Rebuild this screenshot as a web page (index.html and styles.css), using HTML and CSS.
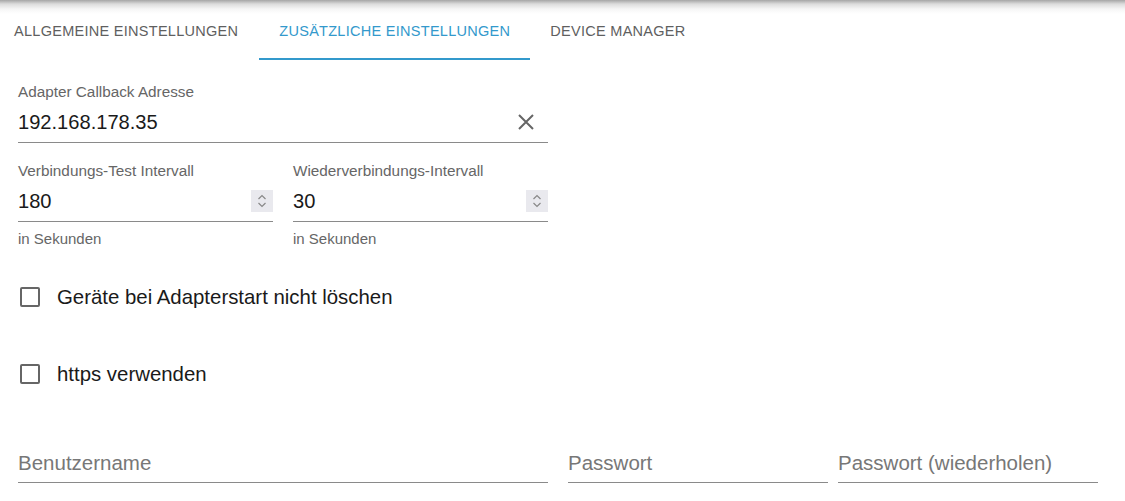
FILE: index.html
```html
<!DOCTYPE html>
<html lang="de">
<head>
<meta charset="utf-8">
<link rel="stylesheet" href="styles.css">
</head>
<body>
<div class="tabs">
  <div class="tab first">Allgemeine Einstellungen</div>
  <div class="tab active">Zusätzliche Einstellungen</div>
  <div class="tab">Device Manager</div>
</div>
<div class="content">
  <div class="field wide">
    <div class="label">Adapter Callback Adresse</div>
    <div class="value-row">
      <span class="value">192.168.178.35</span>
      <svg class="clear" width="20" height="20" viewBox="0 0 20 20"><path d="M3 3 L17 17 M17 3 L3 17" stroke="#666" stroke-width="2" fill="none"/></svg>
    </div>
  </div>
  <div class="row2">
    <div class="col">
      <div class="field">
        <div class="label">Verbindungs-Test Intervall</div>
        <div class="value-row">
          <span class="value">180</span>
          <span class="spin"><svg width="22" height="22" viewBox="0 0 22 22"><path d="M7.5 9 L11 5.5 L14.5 9 M7.5 13 L11 16.5 L14.5 13" stroke="#888" stroke-width="1.2" fill="none"/></svg></span>
        </div>
      </div>
      <div class="helper">in Sekunden</div>
    </div>
    <div class="col">
      <div class="field">
        <div class="label">Wiederverbindungs-Intervall</div>
        <div class="value-row">
          <span class="value">30</span>
          <span class="spin"><svg width="22" height="22" viewBox="0 0 22 22"><path d="M7.5 9 L11 5.5 L14.5 9 M7.5 13 L11 16.5 L14.5 13" stroke="#888" stroke-width="1.2" fill="none"/></svg></span>
        </div>
      </div>
      <div class="helper">in Sekunden</div>
    </div>
  </div>
  <label class="check first-check"><span class="box"></span><span class="check-label">Geräte bei Adapterstart nicht löschen</span></label>
  <label class="check second-check"><span class="box"></span><span class="check-label">https verwenden</span></label>
  <div class="row3">
    <div class="field plain"><div class="placeholder">Benutzername</div></div>
    <div class="field plain"><div class="placeholder">Passwort</div></div>
    <div class="field plain"><div class="placeholder">Passwort (wiederholen)</div></div>
  </div>
</div>
</body>
</html>
```
FILE: styles.css
```css
* { box-sizing: border-box; }
html, body { margin: 0; padding: 0; background: #fff; }
body { font-family: "Liberation Sans", Arial, sans-serif; color: #222; width: 1125px; height: 501px; overflow: hidden; }

.tabs {
  display: flex;
  height: 60px;
  background: linear-gradient(to bottom, #a6a6a6 0px, #dcdcdc 4px, #f6f6f6 9px, #fff 14px);
}
.tab {
  display: flex;
  align-items: center;
  padding: 3px 20px 0;
  font-size: 14.5px;
  letter-spacing: 0.28px;
  text-transform: uppercase;
  color: #5f5f5f;
  border-bottom: 2px solid transparent;
}
.tab.first { padding-left: 14px; padding-right: 21px; }
.tab.active { color: #3399cc; border-bottom-color: #3399cc; }

.content { padding: 0 18px; }

.field { border-bottom: 1px solid #8a8a8a; }
.wide { width: 530px; margin-top: 24px; }
.label { font-size: 15.3px; line-height: 16px; color: #666; }
.value-row {
  display: flex;
  align-items: center;
  justify-content: space-between;
  height: 42px;
  padding: 11px 0 9px;
}
.value { font-size: 20.1px; line-height: 22px; color: #1a1a1a; }
.clear { margin-right: 12px; }

.row2 { display: grid; grid-template-columns: 255px 255px; column-gap: 20px; margin-top: 20px; }
.spin { width: 22px; height: 22px; background: #e9e9ee; display: block; }
.spin svg { display: block; }
.helper { font-size: 15px; line-height: 16px; color: #666; margin-top: 9px; }

.check { display: flex; align-items: center; height: 40px; }
.first-check { margin-top: 30px; }
.second-check { margin-top: 37px; }
.box { width: 20px; height: 20px; border: 2px solid #666; border-radius: 2px; margin-left: 2px; flex: none; }
.check-label { font-size: 20.4px; margin-left: 17px; color: #1a1a1a; }

.row3 { display: grid; grid-template-columns: 530px 280px 270px; margin-top: 58px; }
.row3 .field:nth-child(2) { margin-left: 20px; width: 260px; }
.row3 .field:nth-child(3) { margin-left: 10px; width: 260px; }
.plain { padding-bottom: 8px; }
.placeholder { font-size: 20.5px; line-height: 22px; color: #777; }
```
